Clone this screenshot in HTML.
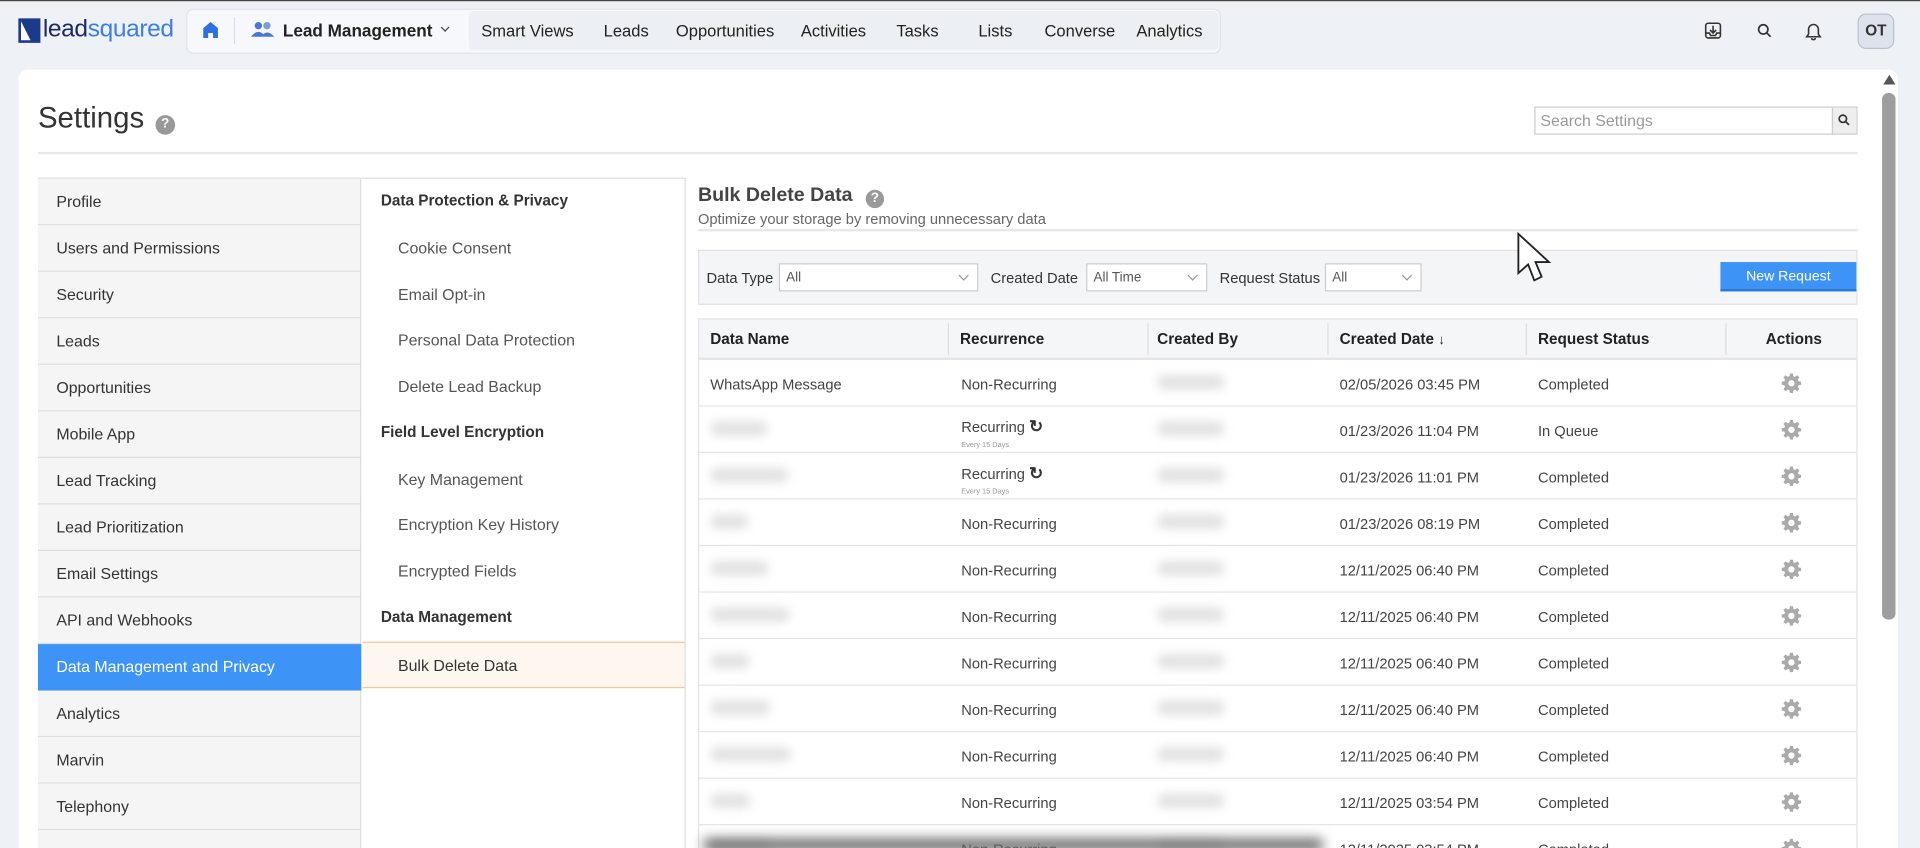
<!DOCTYPE html>
<html><head><meta charset="utf-8">
<style>
*{box-sizing:border-box;margin:0;padding:0}
html,body{width:1920px;height:848px;overflow:hidden;background:#eef1f5;font-family:"Liberation Sans",sans-serif;color:#333}
#w{position:absolute;left:0;top:0;width:1568px;height:692.5px;overflow:hidden;transform:scale(1.22449);transform-origin:0 0;background:#eef1f5;border-top:1.5px solid #444}
.a{position:absolute}
.nav{left:152px;top:6px;width:845px;height:37px;background:#f6f8fb;border:1px solid #dfe4ea;border-radius:6px}
.menu{left:383px;top:8px;width:612px;height:32px;background:#eceff3;border-radius:4px}
.mi{position:absolute;top:17px;font-size:13.5px;color:#222}
.card{left:15px;top:56px;width:1535px;height:660px;background:#fff;border-radius:8px}
.ln{position:absolute;left:31px;width:264px;height:38px;background:#f5f5f5;border-bottom:1px solid #ddd;border-right:1px solid #ddd;font-size:13px;color:#333;padding:11px 0 0 15px}
.md{position:absolute;left:296px;width:263px;height:38px;font-size:13px;color:#555;padding:11px 0 0 29px}
.mh{color:#333;font-weight:bold;padding-left:15px;font-size:12.5px}
.sel{position:absolute;height:23px;background:#fff;border:1px solid #ccc;font-size:11px;color:#555;padding:5px 0 0 5px}
.sel:after{content:"";position:absolute;right:8px;top:6px;width:5px;height:5px;border-right:1px solid #999;border-bottom:1px solid #999;transform:rotate(45deg)}
.fl{position:absolute;top:219px;font-size:12px;color:#333}
.th{position:absolute;top:269px;font-size:12.5px;font-weight:bold;color:#222}
.tr{position:absolute;left:570px;width:947px;height:38px;border-bottom:1px solid #e5e5e5;font-size:12px;color:#444}
.tr span{position:absolute;top:13px}
.bl{position:absolute;top:12px;height:12px;background:#e2e2e2;filter:blur(4px);border-radius:6px}
.vs{position:absolute;top:263px;width:1px;height:26px;background:#ddd}
.help{display:inline-block;width:15px;height:15px;border-radius:50%;background:#999;color:#fff;font-size:11px;font-weight:bold;text-align:center;line-height:15px}
</style></head><body><div id="w">
<div class="a" style="left:15px;top:14px;width:18px;height:20px;background:#1b3a8c"></div>
<div class="a" style="left:17px;top:16px;width:8px;height:16px;background:#fff;clip-path:polygon(0 0,100% 100%,0 100%)"></div>
<div class="a" style="left:35px;top:12px;font-size:20px;color:#1b2a6b;letter-spacing:-0.3px">lead<span style="color:#3d7fe0">squared</span></div>
<div class="a nav"></div>
<svg class="a" style="left:165px;top:16px" width="14" height="15" viewBox="0 0 14 15"><path d="M7 1 L13 6 V14 H9 V10 H5 V14 H1 V6 Z" fill="#2f6fe0"/></svg>
<div class="a" style="left:191px;top:13px;width:1px;height:22px;background:#dde"></div>
<svg class="a" style="left:205px;top:16px" width="19" height="14" viewBox="0 0 19 14"><circle cx="6" cy="4" r="3" fill="#4a78d6"/><circle cx="13" cy="4" r="3" fill="#7a9de0"/><path d="M0 13 Q6 5 12 13Z M8 13 Q13 6 19 13Z" fill="#4a78d6"/></svg>
<div class="a" style="left:231px;top:16px;font-size:14px;font-weight:bold;color:#222">Lead Management</div>
<div class="a" style="left:361px;top:19px;width:5px;height:5px;border-right:1.2px solid #444;border-bottom:1.2px solid #444;transform:rotate(45deg)"></div>
<div class="a menu"></div>
<div class="mi" style="left:393px">Smart Views</div><div class="mi" style="left:493px">Leads</div><div class="mi" style="left:552px">Opportunities</div><div class="mi" style="left:654px">Activities</div><div class="mi" style="left:732px">Tasks</div><div class="mi" style="left:799px">Lists</div><div class="mi" style="left:853px">Converse</div><div class="mi" style="left:928px">Analytics</div>
<svg class="a" style="left:1391px;top:16px" width="16" height="16" viewBox="0 0 16 16" fill="none" stroke="#333" stroke-width="1.3"><rect x="2" y="2" width="12" height="12" rx="2"/><path d="M8 4v6M5.5 7.5 8 10l2.5-2.5M2 10h3l1 2h4l1-2h3"/></svg>
<svg class="a" style="left:1435px;top:18px" width="12" height="12" viewBox="0 0 12 12" fill="none" stroke="#333" stroke-width="1.4"><circle cx="5" cy="5" r="3.8"/><path d="M8 8l3 3"/></svg>
<svg class="a" style="left:1474px;top:16px" width="14" height="16" viewBox="0 0 14 16" fill="none" stroke="#333" stroke-width="1.3"><path d="M3 11V7a4 4 0 0 1 8 0v4l1.5 2h-11z M5.5 14a1.5 1.5 0 0 0 3 0"/></svg>
<div class="a" style="left:1517px;top:10px;width:30px;height:29px;border-radius:7px;background:#dde3ec;border:1px solid #b9c3d0;font-size:12.5px;font-weight:bold;text-align:center;line-height:27px;color:#333">OT</div>
<div class="a card"></div>
<div class="a" style="left:1538px;top:60px;width:0;height:0;border-left:5px solid transparent;border-right:5px solid transparent;border-bottom:8px solid #555"></div>
<div class="a" style="left:1537px;top:75px;width:11px;height:430px;background:#9e9e9e;border-radius:5px"></div>
<div class="a" style="left:31px;top:82px;font-size:24px;color:#333">Settings</div>
<div class="a" style="left:127px;top:90px"><span class="help" style="width:16px;height:16px">?</span></div>
<div class="a" style="left:1253px;top:86px;width:264px;height:23px;border:1px solid #ccc;font-size:13px;color:#999;padding:3px 0 0 4px">Search Settings</div>
<div class="a" style="left:1496px;top:87px;width:20px;height:21px;background:#eee;border-left:1px solid #ccc"></div>
<svg class="a" style="left:1501px;top:92px" width="10" height="10" viewBox="0 0 10 10" fill="none" stroke="#333" stroke-width="1.4"><circle cx="4" cy="4" r="3"/><path d="M6.2 6.2 9 9"/></svg>
<div class="a" style="left:31px;top:123px;width:1486px;height:2px;background:#e8e8e8"></div>
<div class="a" style="left:31px;top:144px;width:529px;height:560px;border:1px solid #ddd;border-bottom:none"></div>
<div class="ln" style="top:145px">Profile</div><div class="ln" style="top:183px">Users and Permissions</div><div class="ln" style="top:221px">Security</div><div class="ln" style="top:259px">Leads</div><div class="ln" style="top:297px">Opportunities</div><div class="ln" style="top:335px">Mobile App</div><div class="ln" style="top:373px">Lead Tracking</div><div class="ln" style="top:411px">Lead Prioritization</div><div class="ln" style="top:449px">Email Settings</div><div class="ln" style="top:487px">API and Webhooks</div>
<div class="ln" style="top:525px;background:#3d94f6;color:#fff;border-color:#3d94f6">Data Management and Privacy</div>
<div class="ln" style="top:563px">Analytics</div><div class="ln" style="top:601px">Marvin</div><div class="ln" style="top:639px">Telephony</div><div class="ln" style="top:677px"></div>
<div class="md mh" style="top:145px">Data Protection &amp; Privacy</div><div class="md" style="top:183px">Cookie Consent</div><div class="md" style="top:221px">Email Opt-in</div><div class="md" style="top:258px">Personal Data Protection</div><div class="md" style="top:296px">Delete Lead Backup</div><div class="md mh" style="top:334px">Field Level Encryption</div><div class="md" style="top:372px">Key Management</div><div class="md" style="top:409px">Encryption Key History</div><div class="md" style="top:447px">Encrypted Fields</div><div class="md mh" style="top:485px">Data Management</div>
<div class="md" style="top:523px;background:#fdf7f0;border-top:1px solid #f3c796;border-bottom:1px solid #f3c796;color:#333">Bulk Delete Data</div>
<div class="a" style="left:570px;top:150px;font-size:16px;font-weight:bold;color:#444">Bulk Delete Data</div>
<div class="a" style="left:707px;top:151px"><span class="help">?</span></div>
<div class="a" style="left:570px;top:171px;font-size:12px;color:#666">Optimize your storage by removing unnecessary data</div>
<div class="a" style="left:570px;top:186px;width:947px;height:2px;background:#e8e8e8"></div>
<div class="a" style="left:570px;top:203px;width:947px;height:45px;background:#f4f5f7;border:1px solid #e2e2e2"></div>
<div class="fl" style="left:577px">Data Type</div><div class="sel" style="left:636px;top:214px;width:163px">All</div>
<div class="fl" style="left:809px">Created Date</div><div class="sel" style="left:887px;top:214px;width:99px">All Time</div>
<div class="fl" style="left:996px">Request Status</div><div class="sel" style="left:1082px;top:214px;width:79px">All</div>
<div class="a" style="left:1405px;top:213px;width:111px;height:24px;background:#3d94f6;border-bottom:2px solid #2a78d8;color:#fff;font-size:11.5px;text-align:center;line-height:24px">New Request</div>
<div class="a" style="left:570px;top:259px;width:947px;height:450px;border:1px solid #e2e2e2"></div>
<div class="a" style="left:571px;top:260px;width:945px;height:33px;background:#f5f6f8;border-bottom:2px solid #e6e6e6"></div>
<div class="th" style="left:580px">Data Name</div><div class="th" style="left:784px">Recurrence</div><div class="th" style="left:945px">Created By</div><div class="th" style="left:1094px">Created Date <span style="font-size:11px">&#8595;</span></div><div class="th" style="left:1256px">Request Status</div><div class="th" style="left:1442px">Actions</div>
<div class="vs" style="left:774px"></div><div class="vs" style="left:937px"></div><div class="vs" style="left:1084px"></div><div class="vs" style="left:1246px"></div><div class="vs" style="left:1409px"></div>
<div id="rows"></div>
<script>
var R=[["WhatsApp Message","N","02/05/2026 03:45 PM","Completed"],["","R","01/23/2026 11:04 PM","In Queue"],["","R","01/23/2026 11:01 PM","Completed"],["","N","01/23/2026 08:19 PM","Completed"],["","N","12/11/2025 06:40 PM","Completed"],["","N","12/11/2025 06:40 PM","Completed"],["","N","12/11/2025 06:40 PM","Completed"],["","N","12/11/2025 06:40 PM","Completed"],["","N","12/11/2025 06:40 PM","Completed"],["","N","12/11/2025 03:54 PM","Completed"],["","N","12/11/2025 03:54 PM","Completed"]];
var h="";var gear='<svg width="16" height="16" viewBox="0 0 16 16"><path fill="#aaa" d="M6.8 0h2.4l.4 2.2 1.3.6 1.9-1.3 1.7 1.7-1.3 1.9.6 1.3 2.2.4v2.4l-2.2.4-.6 1.3 1.3 1.9-1.7 1.7-1.9-1.3-1.3.6-.4 2.2H6.8l-.4-2.2-1.3-.6-1.9 1.3-1.7-1.7 1.3-1.9-.6-1.3L0 9.2V6.8l2.2-.4.6-1.3-1.3-1.9 1.7-1.7 1.9 1.3 1.3-.6z"/><circle cx="8" cy="8" r="2.6" fill="#fff"/></svg>';
R.forEach(function(r,i){var t=293+i*38;h+='<div class="tr" style="top:'+t+'px">';
h+=r[0]?'<span style="left:10px">'+r[0]+'</span>':'<div class="bl" style="left:10px;width:'+(30+(i*17)%50)+'px"></div>';
h+=r[1]=="N"?'<span style="left:215px">Non-Recurring</span>':'<span style="left:215px;top:8px">Recurring <b style="font-size:14px;color:#333">&#8635;</b><br><i style="font-style:normal;font-size:6px;color:#999;position:relative;top:-3px">Every 15 Days</i></span>';
h+='<div class="bl" style="left:375px;width:55px"></div>';
h+='<span style="left:524px">'+r[2]+'</span><span style="left:686px">'+r[3]+'</span><span style="left:885px;top:11px">'+gear+'</span></div>';});
document.getElementById("rows").innerHTML=h;
</script>
<div class="a" style="left:575px;top:684px;width:505px;height:10px;background:#666;filter:blur(5px)"></div>
<svg class="a" style="left:1238px;top:188px" width="32" height="46" viewBox="0 0 32 46"><path d="M2 2 L2 34 L10 27 L15 40 L21 37 L16 25 L27 25 Z" fill="#fff" stroke="#222" stroke-width="1.5"/></svg>
</div></body></html>
